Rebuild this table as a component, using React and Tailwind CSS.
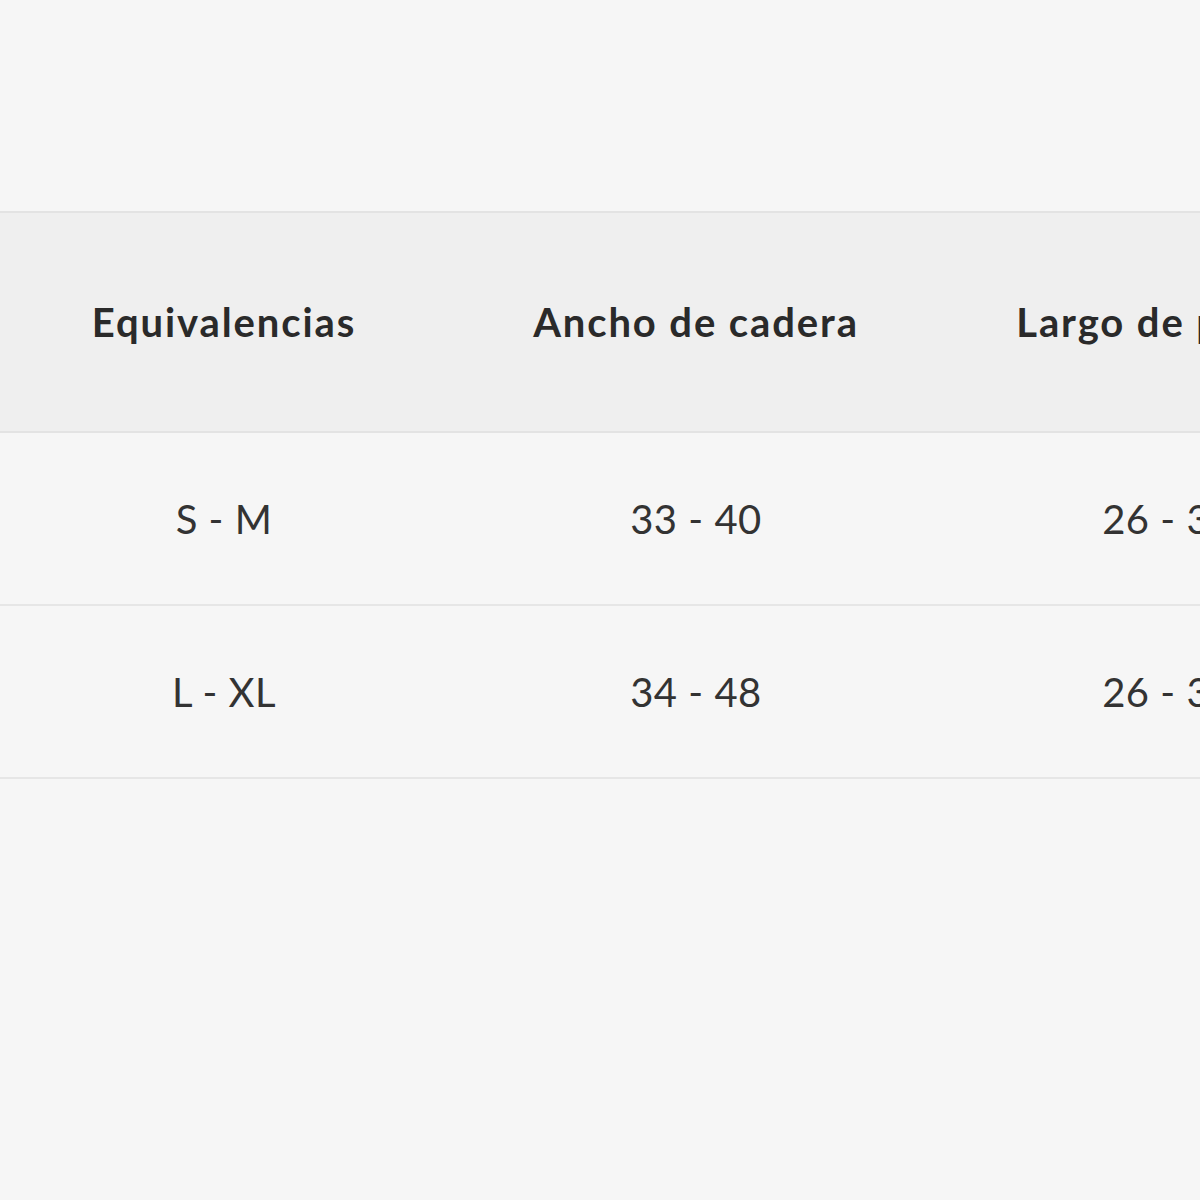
import React from 'react';

const cols = ['Equivalencias', 'Ancho de cadera', 'Largo de pierna'];
const rows = [
  ['S - M', '33 - 40', '26 - 32'],
  ['L - XL', '34 - 48', '26 - 34'],
];

export default function App() {
  return (
    <div className="w-[1200px] h-[1200px] overflow-hidden bg-[#f6f6f6] text-[#2b2b2b]" style={{ fontFamily: 'Lato, "Open Sans", sans-serif' }}>
      <div className="h-[211px]" />
      <div className="border-t-2 border-[#e3e3e3]">
        <div className="flex h-[220px] items-center bg-[#efefef] border-b-2 border-[#e3e3e3] -ml-[12px]">
          {cols.map((c) => (
            <div key={c} className="w-[472px] shrink-0 text-center text-[40px] font-bold tracking-[1.9px] text-[#2a2a2a] whitespace-nowrap">
              {c}
            </div>
          ))}
        </div>
        {rows.map((r, i) => (
          <div key={i} className="flex h-[173px] items-center border-b-2 border-[#e6e6e6] -ml-[12px]">
            {r.map((v, j) => (
              <div key={j} className="w-[472px] shrink-0 text-center text-[40px] text-[#333] tracking-[0.5px] whitespace-nowrap">
                {v}
              </div>
            ))}
          </div>
        ))}
      </div>
    </div>
  );
}
